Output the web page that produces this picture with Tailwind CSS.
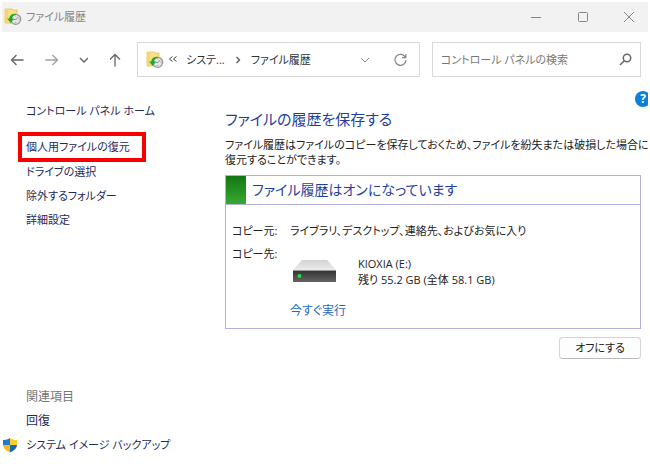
<!DOCTYPE html>
<html lang="ja">
<head>
<meta charset="utf-8">
<meta name="viewport" content="width=device-width, initial-scale=1">
<title>ファイル履歴</title>
<script src="https://cdn.jsdelivr.net/npm/@tailwindcss/browser@4"></script>
</head>
<body class="min-h-screen bg-white p-0.5 font-['Open_Sans','Noto_Sans_CJK_JP',sans-serif] text-[11px] leading-4 text-[#222] [font-feature-settings:'palt']">
<svg class="hidden" aria-hidden="true">
  <symbol id="history" viewBox="0 0 18 18">
    <path d="M1 1h7l1 1h4v13H1z" fill="#fbe08a" stroke="#e5bd55" stroke-width=".8"/>
    <path d="M1 1h3v14H1z" fill="#f8d66f"/>
    <circle cx="11.7" cy="11.3" r="5" fill="#e3e5e5" stroke="#92999a" stroke-width="1.3"/>
    <path d="M11.7 11.5l2.6-2.3M11.7 11.5H9.5M11.7 7.5v.9M15.5 11.3h-.9M11.7 15v-.8" fill="none" stroke="#777" stroke-width=".8"/>
    <path d="M11.7 5.8C8 5.5 5.5 7.500 5.2 10.600H3.100l3.600 4.300 3.400-4.300H8.200c.1-2 1.300-3.400 3.500-3.500z" fill="#25a52d"/>
  </symbol>
</svg>

<header class="flex h-[30px] items-center bg-[#f2f2f2] pl-0.5">
  <svg class="size-[18px]" aria-hidden="true"><use href="#history"/></svg>
  <h1 class="ml-1 flex-1 text-[#868686]">ファイル履歴</h1>
  <div class="flex text-[#858585]">
    <button type="button" aria-label="最小化" class="flex h-[30px] w-[47px] items-center justify-center"><svg class="size-3" viewBox="0 0 12 12" fill="none" stroke="currentColor"><path d="M1 6.5h10"/></svg></button>
    <button type="button" aria-label="最大化" class="flex h-[30px] w-[47px] items-center justify-center"><svg class="size-3" viewBox="0 0 12 12" fill="none" stroke="currentColor"><rect x="1.5" y="1.5" width="9" height="9" rx="1"/></svg></button>
    <button type="button" aria-label="閉じる" class="flex h-[30px] w-[42px] items-center justify-center pl-1"><svg class="size-3" viewBox="0 0 12 12" fill="none" stroke="currentColor"><path d="M1 1l10 10M11 1L1 11"/></svg></button>
  </div>
</header>

<nav class="flex items-center gap-3 pt-[10px] pr-[7px] pl-2">
  <div class="flex flex-none items-center gap-5 pr-[3px] text-[#666]">
    <button type="button" aria-label="戻る"><svg class="size-[14px]" viewBox="0 0 14 14" fill="none" stroke="currentColor" stroke-width="1.3"><path d="M13.5 7H1.5M6.5 2L1.5 7l5 5"/></svg></button>
    <button type="button" aria-label="進む" class="text-[#a0a0a0]"><svg class="size-[14px]" viewBox="0 0 14 14" fill="none" stroke="currentColor" stroke-width="1.3"><path d="M1.5 7h12M8.5 2l5 5-5 5"/></svg></button>
    <button type="button" aria-label="最近の場所"><svg class="h-[14px] w-2.5" viewBox="0 0 10 14" fill="none" stroke="currentColor" stroke-width="1.4"><path d="M2 5l4 4 4-4"/></svg></button>
    <button type="button" aria-label="上へ"><svg class="size-[14px]" viewBox="0 0 14 14" fill="none" stroke="currentColor" stroke-width="1.3"><path d="M7 13.5V1.5M2 6.5l5-5 5 5"/></svg></button>
  </div>
  <div class="flex h-[35px] min-w-0 flex-[284] items-center border border-[#d9d9d9] pr-3 pl-2 text-[#333]">
    <svg class="size-[18px] flex-none" aria-hidden="true"><use href="#history"/></svg>
    <svg class="ml-1 h-2.5 w-2.5 flex-none" viewBox="0 0 10 10" fill="none" stroke="#444"><path d="M4.500 1.500L1.500 4l3 2.500M8.500 1.500L5.500 4l3 2.500"/></svg>
    <a href="#" class="ml-2 whitespace-nowrap">システ...</a>
    <svg class="mx-2 size-2.5 flex-none" viewBox="0 0 10 10" fill="none" stroke="#555" stroke-width="1.3"><path d="M3.500 2l3 3-3 3"/></svg>
    <a href="#" class="flex-1 whitespace-nowrap">ファイル履歴</a>
    <button type="button" aria-label="以前の場所"><svg class="size-2.5" viewBox="0 0 10 10" fill="none" stroke="#888"><path d="M1 3l4 4 4-4"/></svg></button>
    <button type="button" aria-label="最新の情報に更新" class="ml-6"><svg class="size-[13px]" viewBox="0 0 13 13" fill="none" stroke="#858585" stroke-width="1.2"><path d="M11.500 4.500A5.500 5.500 0 1 0 12 7M11.800 1v3.700H8"/></svg></button>
  </div>
  <form class="flex h-[35px] min-w-0 flex-[208] items-center border border-[#d9d9d9] pr-2 pl-2" onsubmit="return false">
    <input id="search" type="text" aria-label="コントロール パネルの検索" placeholder="コントロール パネルの検索" class="h-5 min-w-0 flex-1 outline-none placeholder:text-[#777]">
    <button type="submit" aria-label="検索する"><svg class="size-[13px]" viewBox="0 0 13 13" fill="none" stroke="#666" stroke-width="1.500"><circle cx="8" cy="5" r="3.700"/><path d="M5.300 7.700L1 12"/></svg></button>
  </form>
</nav>

<div class="flex justify-end overflow-hidden pt-[14px]">
  <button type="button" aria-label="ヘルプ" class="-mr-[3px] flex size-4 items-center justify-center rounded-full bg-[#0a80d8] text-xs font-bold text-white">?</button>
</div>

<div class="flex items-stretch pr-[7px]">
  <aside class="flex w-[223px] flex-none flex-col pl-4 text-[#1c2a5c]">
    <a href="#" class="-mt-1 ml-2">コントロール パネル ホーム</a>
    <ul class="mt-[13px] flex flex-col gap-2">
      <li class="-mb-1.5 self-start border-4 border-[#f80000] py-[3px] pr-3 pl-1"><a href="#">個人用ファイルの復元</a></li>
      <li class="ml-2"><a href="#">ドライブの選択</a></li>
      <li class="ml-2"><a href="#">除外するフォルダー</a></li>
      <li class="ml-2"><a href="#">詳細設定</a></li>
    </ul>
  </aside>
  <main class="min-w-0 flex-1">
    <h2 class="pt-0.5 text-[15px] leading-5 text-[#1f3f9e]">ファイルの履歴を保存する</h2>
    <p class="mt-2 leading-[15px] whitespace-nowrap">ファイル履歴はファイルのコピーを保存しておくため、ファイルを紛失または破損した場合に<br>復元することができます。</p>
    <section class="mt-2 border border-[#b0b0dc]">
      <div class="flex h-[29px] items-center border-b border-[#b0b0dc]">
        <span class="h-7 w-5 bg-linear-to-b from-[#147514] to-[#35aa30]"></span>
        <h3 class="ml-1.5 text-sm leading-5 text-[#1f3f9e]">ファイル履歴はオンになっています</h3>
      </div>
      <dl class="grid grid-cols-[58px_1fr] gap-y-[7px] pt-[18px] pb-[9px] pl-1.5">
        <dt>コピー元:</dt>
        <dd>ライブラリ、デスクトップ、連絡先、およびお気に入り</dd>
        <dt>コピー先:</dt>
        <dd>
          <div class="flex pt-2">
            <svg class="mt-1.5 h-6 w-12 flex-none" viewBox="0 0 48 24" aria-hidden="true">
              <defs>
                <linearGradient id="top" x1="0" y1="0" x2="0" y2="1"><stop stop-color="#d2d2d2"/><stop offset="1" stop-color="#ececec"/></linearGradient>
                <linearGradient id="face" x1="0" y1="0" x2="0" y2="1"><stop stop-color="#303030"/><stop offset="1" stop-color="#656565"/></linearGradient>
              </defs>
              <path d="M12 0h25l9 10H3z" fill="url(#top)"/>
              <path d="M3 10h43v12H3z" fill="url(#face)"/>
              <path d="M3 10.500h43" stroke="#999"/>
              <circle cx="9.500" cy="16" r="2" fill="#1fe332"/>
            </svg>
            <div class="ml-5 pt-0.5">KIOXIA (E:)<br>残り 55.2 GB (全体 58.1 GB)</div>
          </div>
          <a href="#" class="mt-[15px] inline-block text-xs text-[#2468c4]">今すぐ実行</a>
        </dd>
      </dl>
    </section>
    <div class="mt-2 flex justify-end">
      <button type="button" class="h-[22px] w-[82px] rounded border border-[#d4d4d4] border-b-[#bababa] bg-[#fdfdfd]">オフにする</button>
    </div>
  </main>
</div>

<footer class="flex flex-col gap-2 pt-[30px] text-[#1c2a5c]">
  <h2 class="ml-6 text-xs leading-4 text-[#767676]">関連項目</h2>
  <a href="#" class="ml-6 text-xs leading-4">回復</a>
  <a href="#" class="flex items-center">
    <svg class="mr-2 h-4 w-4" viewBox="0 0 16 16" aria-hidden="true">
      <path d="M8 1C6 2.500 3.500 3 1 3v5h7z" fill="#2479cf"/>
      <path d="M8 1c2 1.500 4.500 2 7 2v5H8z" fill="#f8ce28"/>
      <path d="M1 8h7v7.500C4 13.500 1.200 11.500 1 8z" fill="#f5bd1d"/>
      <path d="M15 8H8v7.500c4-2 6.800-4 7-7.500z" fill="#1868b7"/>
    </svg>システム イメージ バックアップ</a>
</footer>
</body>
</html>
